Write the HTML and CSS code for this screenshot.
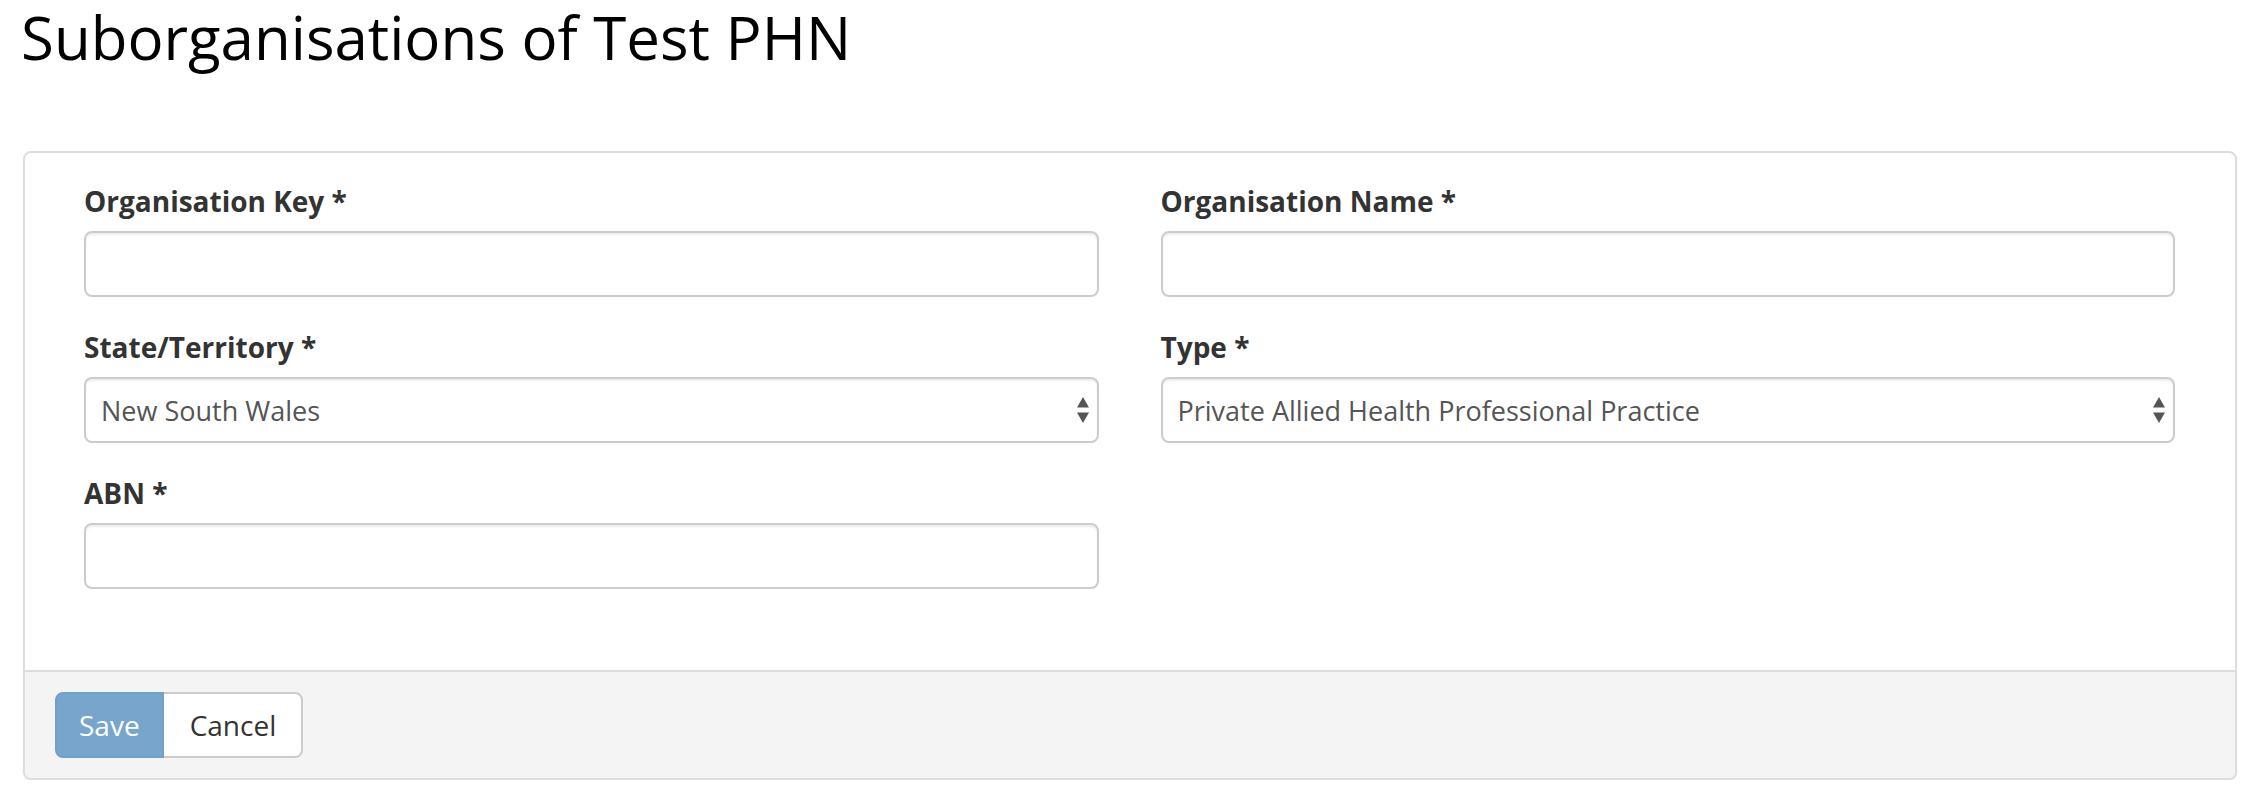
FILE: index.html
```html
<!DOCTYPE html>
<html lang="en">
<head>
<meta charset="utf-8">
<title>Suborganisations of Test PHN</title>
<link rel="stylesheet" href="styles.css">
</head>
<body>
<div class="page">
  <h2 class="title">Suborganisations of Test PHN</h2>
  <form class="panel">
    <div class="panel-body">
      <div class="form-grid">
        <div class="form-group">
          <label class="label" for="orgKey">Organisation Key *</label>
          <input class="control" id="orgKey" type="text">
        </div>
        <div class="form-group">
          <label class="label" for="orgName">Organisation Name *</label>
          <input class="control" id="orgName" type="text">
        </div>
        <div class="form-group">
          <label class="label" for="state">State/Territory *</label>
          <div class="select-wrap">
            <select class="control select" id="state">
              <option>New South Wales</option>
            </select>
            <svg class="select-arrow" width="14" height="28" viewBox="0 0 14 28" aria-hidden="true">
              <path d="M7 1 L13 11.5 L1 11.5 Z" fill="#555"/>
              <path d="M1 16.5 L13 16.5 L7 27 Z" fill="#555"/>
            </svg>
          </div>
        </div>
        <div class="form-group">
          <label class="label" for="type">Type *</label>
          <div class="select-wrap">
            <select class="control select" id="type">
              <option>Private Allied Health Professional Practice</option>
            </select>
            <svg class="select-arrow" width="14" height="28" viewBox="0 0 14 28" aria-hidden="true">
              <path d="M7 1 L13 11.5 L1 11.5 Z" fill="#555"/>
              <path d="M1 16.5 L13 16.5 L7 27 Z" fill="#555"/>
            </svg>
          </div>
        </div>
        <div class="form-group">
          <label class="label" for="abn">ABN *</label>
          <input class="control" id="abn" type="text">
        </div>
      </div>
    </div>
    <div class="panel-footer">
      <div class="btn-group">
        <button type="button" class="btn btn-save">Save</button>
        <button type="button" class="btn btn-cancel">Cancel</button>
      </div>
    </div>
  </form>
</div>
</body>
</html>
```

FILE: styles.css
```css
html, body {
  margin: 0;
  padding: 0;
  background: #fff;
}

body {
  font-family: "Open Sans", "Liberation Sans", sans-serif;
  color: #333;
}

.page {
  padding: 0 23px;
}

.title {
  margin: 4px 0 81px -2px;
  font-size: 60px;
  line-height: 66px;
  font-weight: 400;
  color: #000;
}

.panel {
  margin: 0;
  border: 2px solid #ddd;
  border-radius: 8px;
  box-shadow: 0 2px 2px rgba(0, 0, 0, 0.05);
  background: #fff;
  overflow: hidden;
}

.panel-body {
  padding: 28px 60px 81px 59px;
}

.form-grid {
  display: grid;
  grid-template-columns: 1fr 1fr;
  column-gap: 62px;
  row-gap: 30px;
}

.form-group {
  display: flex;
  flex-direction: column;
}

.label {
  display: block;
  font-size: 28px;
  line-height: 40px;
  font-weight: 700;
  color: #333;
  margin-bottom: 10px;
}

.control {
  display: block;
  box-sizing: border-box;
  width: 100%;
  height: 66px;
  margin: 0;
  padding: 0 15px;
  border: 2px solid #ccc;
  border-radius: 8px;
  background: #fff;
  box-shadow: inset 0 2px 2px rgba(0, 0, 0, 0.075);
  font-family: "Open Sans", "Liberation Sans", sans-serif;
  font-size: 27px;
  color: #555;
  outline: none;
}

.select-wrap {
  position: relative;
}

.select {
  appearance: none;
  -webkit-appearance: none;
  padding-right: 40px;
}

.select-arrow {
  position: absolute;
  right: 9px;
  top: 50%;
  margin-top: -14px;
  pointer-events: none;
}

.panel-footer {
  background: #f4f4f4;
  border-top: 2px solid #ddd;
  padding: 20px 30px;
}

.btn-group {
  display: flex;
}

.btn {
  box-sizing: border-box;
  height: 66px;
  margin: 0;
  padding: 0 22px;
  border: 2px solid #ccc;
  font-family: "Open Sans", "Liberation Sans", sans-serif;
  font-size: 28px;
  line-height: 40px;
  font-weight: 400;
  cursor: pointer;
}

.btn-save {
  background: #78a5cc;
  border-color: #72a0c8;
  color: #fff;
  border-radius: 8px 0 0 8px;
}

.btn-cancel {
  background: #fff;
  color: #333;
  border-left: none;
  border-radius: 0 8px 8px 0;
  padding-left: 26px;
  padding-right: 25px;
}
```
